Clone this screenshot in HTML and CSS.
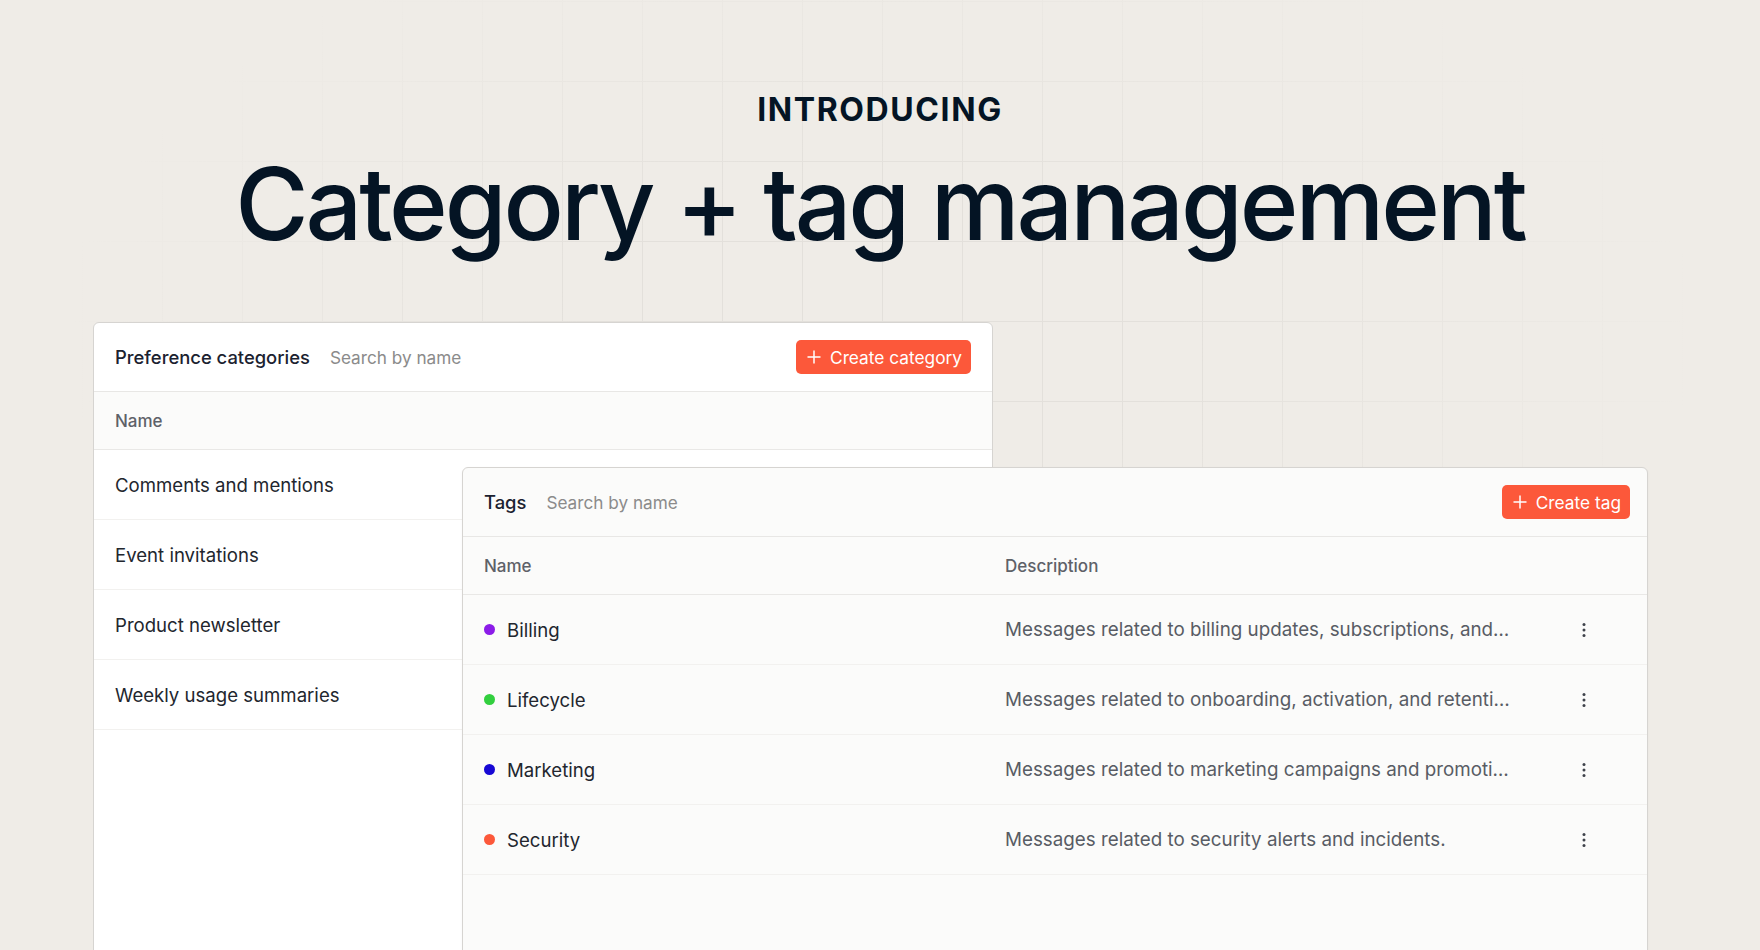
FILE: index.html
```html
<!DOCTYPE html>
<html lang="en">
<head>
  <meta charset="UTF-8" />
  <meta name="viewport" content="width=device-width, initial-scale=1.0"/>
  <title>Category + tag management</title>
  <link rel="stylesheet" href="styles.css">
</head>
<body>

  <main class="page">
    <header class="hero">
      <p class="eyebrow">INTRODUCING</p>
      <h1 class="title">Category + tag management</h1>
    </header>

    <section class="stage">

      <!-- Preference categories table -->
      <div class="panel categories">
        <div class="panel-head">
          <div class="head-left">
            <span class="panel-title">Preference categories</span>
            <span class="search">Search by name</span>
          </div>
          <button class="btn-create">
            <svg width="14" height="14" viewBox="0 0 14 14"><path d="M7 0.5v13M0.5 7h13" stroke="#fff" stroke-width="1.5" fill="none"/></svg>
            Create category
          </button>
        </div>
        <div class="col-head">
          <span>Name</span>
        </div>
        <ul class="rows">
          <li class="row">Comments and mentions</li>
          <li class="row">Event invitations</li>
          <li class="row">Product newsletter</li>
          <li class="row">Weekly usage summaries</li>
        </ul>
      </div>

      <!-- Tags table -->
      <div class="panel tags">
        <div class="panel-head">
          <div class="head-left">
            <span class="panel-title">Tags</span>
            <span class="search">Search by name</span>
          </div>
          <button class="btn-create">
            <svg width="14" height="14" viewBox="0 0 14 14"><path d="M7 0.5v13M0.5 7h13" stroke="#fff" stroke-width="1.5" fill="none"/></svg>
            Create tag
          </button>
        </div>
        <div class="col-head tag-grid">
          <span>Name</span>
          <span>Description</span>
        </div>
        <ul class="rows">
          <li class="row tag-grid">
            <span class="tag-name"><i class="dot purple"></i>Billing</span>
            <span class="desc">Messages related to billing updates, subscriptions, and payment receipts.</span>
            <span class="kebab"><svg width="4" height="16" viewBox="0 0 4 16"><circle cx="2" cy="2.5" r="1.5"/><circle cx="2" cy="8" r="1.5"/><circle cx="2" cy="13.5" r="1.5"/></svg></span>
          </li>
          <li class="row tag-grid">
            <span class="tag-name"><i class="dot green"></i>Lifecycle</span>
            <span class="desc">Messages related to onboarding, activation, and retention journeys.</span>
            <span class="kebab"><svg width="4" height="16" viewBox="0 0 4 16"><circle cx="2" cy="2.5" r="1.5"/><circle cx="2" cy="8" r="1.5"/><circle cx="2" cy="13.5" r="1.5"/></svg></span>
          </li>
          <li class="row tag-grid">
            <span class="tag-name"><i class="dot blue"></i>Marketing</span>
            <span class="desc">Messages related to marketing campaigns and promotions.</span>
            <span class="kebab"><svg width="4" height="16" viewBox="0 0 4 16"><circle cx="2" cy="2.5" r="1.5"/><circle cx="2" cy="8" r="1.5"/><circle cx="2" cy="13.5" r="1.5"/></svg></span>
          </li>
          <li class="row tag-grid">
            <span class="tag-name"><i class="dot orange"></i>Security</span>
            <span class="desc">Messages related to security alerts and incidents.</span>
            <span class="kebab"><svg width="4" height="16" viewBox="0 0 4 16"><circle cx="2" cy="2.5" r="1.5"/><circle cx="2" cy="8" r="1.5"/><circle cx="2" cy="13.5" r="1.5"/></svg></span>
          </li>
        </ul>
      </div>

    </section>
  </main>

</body>
</html>
```

FILE: styles.css
```css
* {margin: 0;padding: 0;box-sizing: border-box;}

html, body {height: 950px;overflow: hidden;}

body {
  font-family: Inter, 'Noto Sans', sans-serif;
  color: #041424;
  background-color: #efece7;
  /* faint 80px grid that fades out toward the edges */
  background-image:
    radial-gradient(ellipse 820px 430px at 880px 330px, rgba(239, 236, 231, 0) 35%, #efece7 100%),
    linear-gradient(to right, #e3e0db 1px, transparent 1px),
    linear-gradient(to bottom, #e3e0db 1px, transparent 1px);
  background-size: 100% 100%, 80px 80px, 80px 80px;
  background-position: 0 0, 2px 1px, 2px 1px;
}

/* Hero */
.hero {
  text-align: center;
  padding-top: 90px;
}

.eyebrow {
  font-size: 32px;
  line-height: 40px;
  font-weight: 700;
  letter-spacing: 0.05em;
}

.title {
  margin-top: 19px;
  font-size: 100px;
  line-height: 110px;
  font-weight: 500;
  letter-spacing: -0.031em;
}

/* Overlapping panels */
.stage {
  display: grid;
  margin-top: 63px;
}

.panel {
  grid-area: 1 / 1;
  border: 1px solid #d6d4d1;
  border-radius: 6px;
  overflow: hidden;
}

.categories {
  margin-left: 93px;
  width: 900px;
  height: 700px;
  background: #fff;
}

.tags {
  margin-left: 462px;
  margin-top: 145px;
  width: 1186px;
  height: 560px;
  background: #fbfbfa;
  box-shadow: 0 1px 3px rgba(0, 0, 0, 0.04);
}

.panel-head {
  display: flex;
  align-items: center;
  justify-content: space-between;
  height: 69px;
  padding: 0 21px 0 21px;
  border-bottom: 1px solid #e8e7e5;
}

.tags .panel-head {padding: 0 17px 0 21px;}

.head-left {
  display: flex;
  align-items: center;
  gap: 20px;
}

.panel-title {
  font-size: 18.4px;
  font-weight: 500;
  color: #1b2230;
}

.search {
  font-size: 17.2px;
  color: #8b8b8b;
}

.btn-create {
  display: flex;
  align-items: center;
  gap: 9px;
  height: 34px;
  padding: 0 9px 0 11px;
  background: #fc583a;
  color: #fff;
  font-family: inherit;
  font-size: 17.3px;
  border: none;
  border-radius: 5px;
}

.col-head {
  display: flex;
  align-items: center;
  height: 58px;
  padding: 0 21px;
  background: #fbfbfa;
  border-bottom: 1px solid #e9e8e6;
  font-size: 17px;
  font-weight: 450;
  color: #5e6168;
}

.rows {list-style: none;}

.row {
  display: flex;
  align-items: center;
  height: 70px;
  padding: 0 21px;
  border-bottom: 1px solid #f2f1ef;
  font-size: 18.6px;
  color: #22262e;
}

/* Tags table columns */
.tag-grid {
  display: grid;
  grid-template-columns: 521px 508px 1fr;
  align-items: center;
  padding: 0 51px 0 21px;
}

.tag-name {
  display: flex;
  align-items: center;
  gap: 12px;
}

.dot {
  width: 11px;
  height: 11px;
  border-radius: 50%;
}

.dot.purple {background: #8b1ce8;}
.dot.green {background: #32cf3e;}
.dot.blue {background: #1708d4;}
.dot.orange {background: #fc583a;}

.desc {
  white-space: nowrap;
  overflow: hidden;
  text-overflow: ellipsis;
  font-size: 18.8px;
  color: #585c64;
}

.kebab {
  justify-self: end;
  display: flex;
  width: 24px;
  justify-content: center;
  fill: #3e424a;
}
```
